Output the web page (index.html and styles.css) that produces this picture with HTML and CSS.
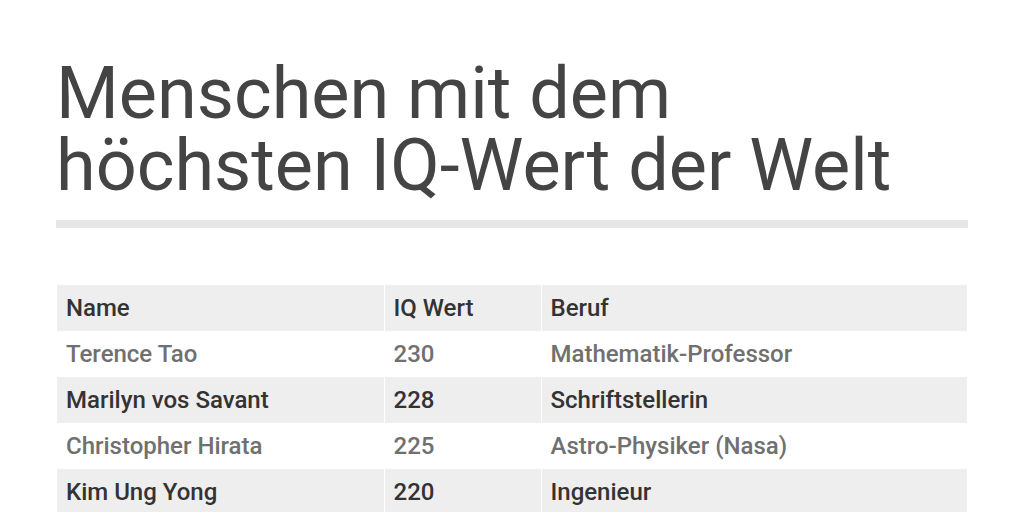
FILE: index.html
```html
<!DOCTYPE html>
<html lang="de">
<head>
<meta charset="utf-8">
<link rel="stylesheet" href="styles.css">
</head>
<body>
<main class="page">
  <h1 class="title"><span class="line">Menschen mit dem</span><span class="line">höchsten IQ-Wert der Welt</span></h1>
  <div class="rule"></div>
  <table class="table">
    <thead>
      <tr><th class="c1">Name</th><th class="c2">IQ Wert</th><th class="c3">Beruf</th></tr>
    </thead>
    <tbody>
      <tr><td>Terence Tao</td><td>230</td><td>Mathematik-Professor</td></tr>
      <tr><td>Marilyn vos Savant</td><td>228</td><td>Schriftstellerin</td></tr>
      <tr><td>Christopher Hirata</td><td>225</td><td>Astro-Physiker (Nasa)</td></tr>
      <tr><td>Kim Ung Yong</td><td>220</td><td>Ingenieur</td></tr>
    </tbody>
  </table>
</main>
</body>
</html>
```
FILE: styles.css
```css
html, body {
  margin: 0;
  padding: 0;
  background: #ffffff;
}
body {
  font-family: Roboto, "Liberation Sans", sans-serif;
  overflow: hidden;
  height: 512px;
}
.page {
  padding: 58px 56px 0 56px;
}
.title {
  margin: 0;
  font-size: 72px;
  font-weight: 400;
  color: #444444;
  display: flex;
  flex-direction: column;
}
.title .line {
  display: block;
  height: 72px;
  line-height: 72px;
  white-space: nowrap;
}
.rule {
  margin-top: 18px;
  height: 8px;
  background: #e6e6e6;
}
.table {
  margin-top: 57px;
  margin-left: 1px;
  width: 910px;
  border-collapse: collapse;
  font-size: 24px;
}
.table th, .table td {
  height: 46px;
  padding: 0 0 0 9px;
  text-align: left;
  box-sizing: border-box;
  border-left: 1px solid #ffffff;
  vertical-align: middle;
  white-space: nowrap;
  font-weight: 500;
}
.table th:first-child, .table td:first-child {
  border-left: none;
}
.table th {
  background: #eeeeee;
  color: #333333;
}
.c1 { width: 327px; }
.c2 { width: 157px; }
.table tbody tr:nth-child(odd) td {
  background: #ffffff;
  color: #707070;
}
.table tbody tr:nth-child(even) td {
  background: #eeeeee;
  color: #333333;
}
```
